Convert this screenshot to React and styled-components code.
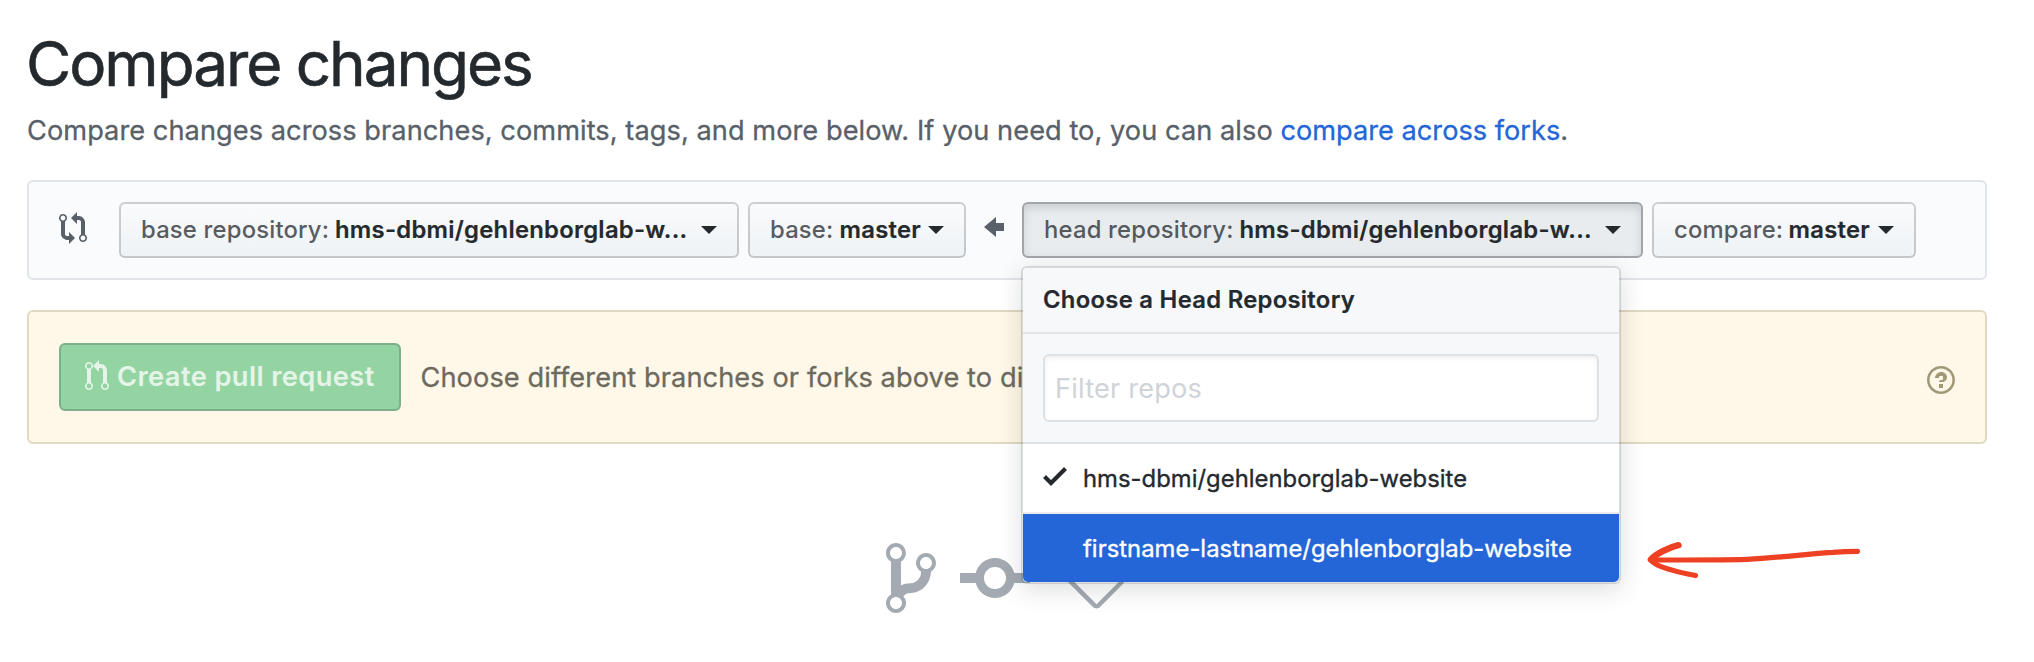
import React from "react";
import styled, { createGlobalStyle, css } from "styled-components";

const GlobalStyle = createGlobalStyle`
  * { box-sizing: border-box; }
  body {
    margin: 0;
    background: #fff;
    color: #24292e;
    font-family: Inter, "Liberation Sans", sans-serif;
    overflow: hidden;
  }
`;

const Page = styled.main`
  position: relative;
  height: 662px;
  padding: 32px 47px 0 27px;
`;

const Title = styled.h1`
  margin: 0 0 0 -1px;
  font-size: 62px;
  font-weight: 400;
  line-height: 64px;
  letter-spacing: -2.05px;
  -webkit-text-stroke: 0.6px currentColor;
`;

const Subtitle = styled.p`
  margin: 14px 0 0;
  height: 42px;
  font-size: 27.2px;
  line-height: 42px;
  letter-spacing: 0.053px;
  color: #586069;
  white-space: nowrap;
  -webkit-text-stroke: 0.3px currentColor;
`;

const Link = styled.a`
  color: #2466d8;
  letter-spacing: 0;
  text-decoration: none;
`;

const RangeEditor = styled.div`
  display: flex;
  align-items: center;
  height: 100px;
  margin-top: 28px;
  padding: 0 30px;
  background: #fafbfc;
  border: 2px solid #e1e4e8;
  border-radius: 6px;
`;

const CompareIcon = styled.svg`
  flex: none;
  width: 28px;
  height: 32px;
  margin: 0 32px 4px 0;
  fill: #586069;
`;

const ArrowIcon = styled.svg`
  flex: none;
  width: 20px;
  height: 32px;
  margin: 0 18px 6px;
  fill: #586069;
`;

const SelectButton = styled.button`
  flex: none;
  display: flex;
  align-items: center;
  width: ${(p) => p.$width}px;
  height: 56px;
  padding: 0 20px;
  border: 2px solid rgba(27, 31, 35, 0.2);
  border-radius: 6px;
  background: #eff3f6 linear-gradient(-180deg, #fafbfc 0%, #eff3f6 90%) -2px -2px / 110% 110%;
  color: #24292e;
  font-family: inherit;
  font-size: 23.8px;
  font-weight: 600;
  line-height: 40px;
  white-space: nowrap;

  & + & {
    margin-left: ${(p) => p.$gap || 8}px;
  }

  ${(p) =>
    p.$open &&
    css`
      background: #e9ecef;
      border-color: #a2a5aa;
      box-shadow: inset 0 4px 8px rgba(27, 31, 35, 0.15);
    `}
`;

const SelectLabel = styled.span`
  flex: none;
  width: ${(p) => p.$width}px;
  font-weight: 500;
  text-align: left;
  letter-spacing: 0.2px;
  opacity: 0.75;
`;

const SelectValue = styled.span`
  letter-spacing: 0.28px;
  -webkit-text-stroke: 0.2px currentColor;
`;

const Caret = styled.span`
  margin-left: auto;
  border: 8px solid transparent;
  border-top-color: #24292e;
  border-bottom: 0;
`;

const Notice = styled.section`
  display: flex;
  align-items: center;
  height: 134px;
  margin-top: 30px;
  padding: 0 30px;
  background: #fff8e8;
  border: 2px solid #dfd8c2;
  border-radius: 6px;
`;

const CreateButton = styled.button`
  flex: none;
  display: flex;
  align-items: center;
  width: 342px;
  height: 68px;
  padding: 0 24px;
  background: #94d4a3;
  border: 2px solid #7bb08a;
  border-radius: 6px;
  color: #e4f4e8;
  font-family: inherit;
  font-size: 27.3px;
  font-weight: 600;
  line-height: 40px;
  letter-spacing: 0.37px;
  white-space: nowrap;

  svg {
    flex: none;
    width: 24px;
    height: 32px;
    margin: 0 8px 3px 0;
    fill: currentColor;
  }
`;

const NoticeText = styled.p`
  margin: 0 0 0 19.5px;
  padding-top: 2px;
  font-size: 27.2px;
  line-height: 42px;
  letter-spacing: 0.09px;
  color: #6c6a5e;
  white-space: nowrap;
  -webkit-text-stroke: 0.3px currentColor;
`;

const HelpIcon = styled.svg`
  flex: none;
  width: 28px;
  height: 32px;
  margin: 6px 0 0 auto;
  fill: #a09878;
`;

const BlankslateIcons = styled.div`
  display: flex;
  gap: 24px;
  margin-top: 94px;
  padding-left: 859px;

  svg {
    flex: none;
    height: 80px;
    fill: #a3aab1;
  }
`;

const Menu = styled.div`
  position: absolute;
  z-index: 2;
  left: 1021px;
  top: 266px;
  width: 600px;
  background: #fff;
  background-clip: padding-box;
  border: 2px solid rgba(27, 31, 35, 0.15);
  border-radius: 6px;
  box-shadow: 0 6px 24px rgba(27, 31, 35, 0.15);
`;

const MenuHeader = styled.div`
  height: 66px;
  padding: 0 20px;
  background: #f6f8fa;
  border-bottom: 2px solid #e1e4e8;
  border-radius: 4px 4px 0 0;
  font-size: 23.8px;
  font-weight: 600;
  line-height: 64px;
  letter-spacing: 0.3px;
  -webkit-text-stroke: 0.2px currentColor;
`;

const MenuFilter = styled.div`
  height: 110px;
  padding: 20px;
  background: #f6f8fa;
  border-bottom: 2px solid #dfe2e5;
`;

const FilterInput = styled.input`
  display: block;
  width: 100%;
  height: 68px;
  padding: 1px 10px 0;
  border: 2px solid #dfe2e5;
  border-radius: 6px;
  outline: 0;
  background: #fff;
  box-shadow: inset 0 2px 4px rgba(27, 31, 35, 0.075);
  font-family: inherit;
  font-size: 27.2px;
  letter-spacing: 0.18px;

  &::placeholder {
    color: #d0d3d8;
    opacity: 1;
  }
`;

const MenuItem = styled.div`
  display: flex;
  align-items: center;
  height: 70px;
  padding: 0 20px;
  border-bottom: 2px solid #eaecef;
  font-size: 23.8px;
  letter-spacing: 0.04px;
  -webkit-text-stroke: 0.35px currentColor;

  &:last-child {
    height: 68px;
    border-bottom: 0;
    border-radius: 0 0 5px 5px;
  }

  ${(p) =>
    p.$active &&
    css`
      background: #2466d8;
      color: #fff;
    `}
`;

const CheckSlot = styled.span`
  flex: none;
  width: 40px;
  height: 36px;

  svg {
    display: block;
    width: 24px;
    height: 32px;
    fill: currentColor;
  }
`;

const HandArrow = styled.svg`
  position: absolute;
  left: 1640px;
  top: 535px;
  width: 230px;
  height: 50px;
  fill: none;
  stroke: #ee4023;
  stroke-linecap: round;
  stroke-linejoin: round;
`;

const paths = {
  compare:
    "M5 12H4c-.27-.02-.48-.11-.69-.31-.21-.2-.3-.42-.31-.69V4.72A1.993 1.993 0 002 1a1.993 1.993 0 00-1 3.72V11c.03.78.34 1.47.94 2.06.6.59 1.28.91 2.06.94h1v2l3-3-3-3v2zM2 1.8c.66 0 1.2.55 1.2 1.2 0 .65-.55 1.2-1.2 1.2C1.35 4.2.8 3.65.8 3c0-.65.55-1.2 1.2-1.2zm11 9.48V5c-.03-.78-.34-1.47-.94-2.06-.6-.59-1.28-.91-2.06-.94H9V0L6 3l3 3V4h1c.27.02.48.11.69.31.21.2.3.42.31.69v6.28A1.993 1.993 0 0012 15a1.993 1.993 0 001-3.72zm-1 2.92c-.66 0-1.2-.55-1.2-1.2 0-.65.55-1.2 1.2-1.2.65 0 1.2.55 1.2 1.2 0 .65-.55 1.2-1.2 1.2z",
  pullRequest:
    "M11 11.28V5c-.03-.78-.34-1.47-.94-2.06C9.46 2.35 8.78 2.03 8 2H7V0L4 3l3 3V4h1c.27.02.48.11.69.31.21.2.3.42.31.69v6.28A1.993 1.993 0 0010 15a1.993 1.993 0 001-3.72zm-1 2.92c-.66 0-1.2-.55-1.2-1.2 0-.65.55-1.2 1.2-1.2.65 0 1.2.55 1.2 1.2 0 .65-.55 1.2-1.2 1.2zM4 3c0-1.11-.89-2-2-2a1.993 1.993 0 00-1 3.72v6.56A1.993 1.993 0 002 15a1.993 1.993 0 001-3.72V4.72c.59-.34 1-.98 1-1.72zm-.8 10c0 .66-.55 1.2-1.2 1.2-.65 0-1.2-.55-1.2-1.2 0-.65.55-1.2 1.2-1.2.65 0 1.2.55 1.2 1.2zM2 4.2C1.34 4.2.8 3.65.8 3c0-.65.55-1.2 1.2-1.2.65 0 1.2.55 1.2 1.2 0 .65-.55 1.2-1.2 1.2z",
  arrowLeft: "M6 3L0 8l6 5v-3h4V6H6V3z",
  branch:
    "M10 5c0-1.11-.89-2-2-2a1.993 1.993 0 00-1 3.72v.3c-.02.52-.23.98-.63 1.38-.4.4-.86.61-1.38.63-.83.02-1.48.16-2 .45V4.72a1.993 1.993 0 00-1-3.72C.88 1 0 1.89 0 3a2 2 0 001 1.72v6.56c-.59.35-1 .99-1 1.72 0 1.11.89 2 2 2 1.11 0 2-.89 2-2 0-.53-.2-1-.53-1.36.09-.06.48-.41.59-.47.25-.11.56-.17.94-.17 1.05-.05 1.95-.45 2.75-1.25S8.95 7.77 9 6.73h-.02C9.59 6.37 10 5.73 10 5zM2 1.8c.66 0 1.2.55 1.2 1.2 0 .65-.55 1.2-1.2 1.2C1.35 4.2.8 3.65.8 3c0-.65.55-1.2 1.2-1.2zm0 12.41c-.66 0-1.2-.55-1.2-1.2 0-.65.55-1.2 1.2-1.2.65 0 1.2.55 1.2 1.2 0 .65-.55 1.2-1.2 1.2zm6-8c-.66 0-1.2-.55-1.2-1.2 0-.65.55-1.2 1.2-1.2.65 0 1.2.55 1.2 1.2 0 .65-.55 1.2-1.2 1.2z",
  commit:
    "M10.86 7c-.45-1.72-2-3-3.86-3-1.86 0-3.41 1.28-3.86 3H0v2h3.14c.45 1.72 2 3 3.86 3 1.86 0 3.41-1.28 3.86-3H14V7h-3.14zM7 10.2c-1.22 0-2.2-.98-2.2-2.2 0-1.22.98-2.2 2.2-2.2 1.22 0 2.2.98 2.2 2.2 0 1.22-.98 2.2-2.2 2.2z",
  tag: "M7.73 1.73C7.26 1.26 6.62 1 5.96 1H3.5C2.13 1 1 2.13 1 3.5v2.47c0 .66.27 1.3.73 1.77l6.06 6.06c.39.39 1.02.39 1.41 0l4.59-4.59a.996.996 0 000-1.41L7.73 1.73zM2.38 7.09c-.31-.3-.47-.7-.47-1.13V3.5c0-.88.72-1.59 1.59-1.59h2.47c.42 0 .83.16 1.13.47l6.14 6.13-4.73 4.73-6.13-6.15zM3.01 3h2v2H3V3h.01z",
  check: "M12 5l-8 8-4-4 1.5-1.5L4 10l6.5-6.5L12 5z",
  question:
    "M6 10h2v2H6v-2zm4-3.5C10 8.64 8 9 8 9H6c0-.55.45-1 1-1h.5c.28 0 .5-.22.5-.5v-1c0-.28-.22-.5-.5-.5h-1c-.28 0-.5.22-.5.5V7H4c0-1.5 1.5-3 3-3s3 1 3 2.5zM7 2.3c3.14 0 5.7 2.56 5.7 5.7s-2.56 5.7-5.7 5.7A5.71 5.71 0 011.3 8c0-3.14 2.56-5.7 5.7-5.7zM7 1C3.14 1 0 4.14 0 8s3.14 7 7 7 7-3.14 7-7-3.14-7-7-7z",
};

function RangeSelect({ label, labelWidth, value, width, gap, open }) {
  return (
    <SelectButton $width={width} $gap={gap} $open={open}>
      <SelectLabel $width={labelWidth}>{label}</SelectLabel>
      <SelectValue>{value}</SelectValue>
      <Caret />
    </SelectButton>
  );
}

export default function App() {
  return (
    <>
      <GlobalStyle />
      <Page>
        <Title>Compare changes</Title>
        <Subtitle>
          Compare changes across branches, commits, tags, and more below. If you need to, you can also{" "}
          <Link>compare across forks</Link>.
        </Subtitle>

        <RangeEditor>
          <CompareIcon viewBox="0 0 14 16">
            <path fillRule="evenodd" d={paths.compare} />
          </CompareIcon>
          <RangeSelect label="base repository:" labelWidth={194} value="hms-dbmi/gehlenborglab-w..." width={620} />
          <RangeSelect label="base:" labelWidth={69.5} value="master" width={218} />
          <ArrowIcon viewBox="0 0 10 16">
            <path fillRule="evenodd" d={paths.arrowLeft} />
          </ArrowIcon>
          <RangeSelect label="head repository:" labelWidth={195.5} value="hms-dbmi/gehlenborglab-w..." width={621} open />
          <RangeSelect label="compare:" labelWidth={114.5} value="master" width={264} gap={9} />
        </RangeEditor>

        <Notice>
          <CreateButton>
            <svg viewBox="0 0 12 16">
              <path fillRule="evenodd" d={paths.pullRequest} />
            </svg>
            <span>Create pull request</span>
          </CreateButton>
          <NoticeText>Choose different branches or forks above to discuss and review changes.</NoticeText>
          <HelpIcon viewBox="0 0 14 16">
            <path fillRule="evenodd" d={paths.question} />
          </HelpIcon>
        </Notice>

        <BlankslateIcons>
          <svg viewBox="0 0 10 16" width="50">
            <path fillRule="evenodd" d={paths.branch} />
          </svg>
          <svg viewBox="0 0 14 16" width="70">
            <path fillRule="evenodd" d={paths.commit} />
          </svg>
          <svg viewBox="0 0 14 16" width="70">
            <path fillRule="evenodd" d={paths.tag} />
          </svg>
        </BlankslateIcons>

        <Menu>
          <MenuHeader>Choose a Head Repository</MenuHeader>
          <MenuFilter>
            <FilterInput placeholder="Filter repos" />
          </MenuFilter>
          <MenuItem>
            <CheckSlot>
              <svg viewBox="0 0 12 16">
                <path fillRule="evenodd" d={paths.check} />
              </svg>
            </CheckSlot>
            hms-dbmi/gehlenborglab-website
          </MenuItem>
          <MenuItem $active>
            <CheckSlot />
            firstname-lastname/gehlenborglab-website
          </MenuItem>
        </Menu>

        <HandArrow viewBox="1640 535 230 50">
          <path strokeWidth="5.2" d="M1652 560C1690 560 1722 560 1747 559.3C1784 557.5 1815 553 1833 552.3Q1845 551.5 1857.5 551.3" />
          <path strokeWidth="6.4" d="M1678.5 545.2C1668 547.5 1656 554 1651 559.5" />
          <path strokeWidth="5.2" d="M1650.5 560C1656 567 1675 571.5 1695.5 575.5" />
        </HandArrow>
      </Page>
    </>
  );
}
